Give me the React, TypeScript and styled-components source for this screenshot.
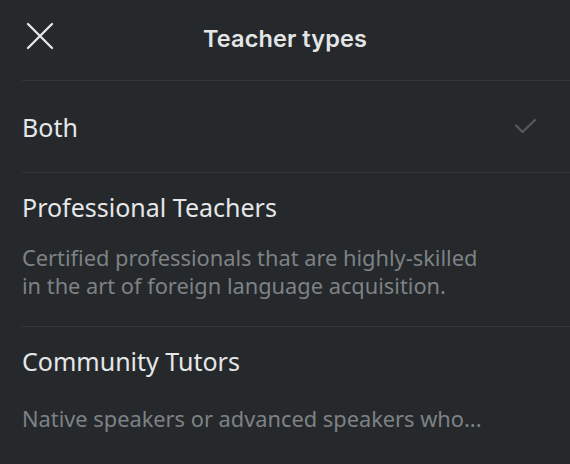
import React from "react";
import styled, { createGlobalStyle } from "styled-components";

const GlobalStyle = createGlobalStyle`
  html, body {
    margin: 0;
    padding: 0;
    background: #25292c;
  }
  body {
    font-family: "Noto Sans", "Open Sans", sans-serif;
    -webkit-font-smoothing: antialiased;
  }
`;

const Screen = styled.div`
  width: 570px;
  height: 464px;
  overflow: hidden;
  background: #25292c;
  display: flex;
  flex-direction: column;
`;

const Header = styled.header`
  position: relative;
  height: 80px;
  display: flex;
  align-items: center;
  justify-content: center;
  flex-shrink: 0;
`;

const CloseButton = styled.button`
  position: absolute;
  left: 22px;
  top: 18px;
  width: 36px;
  height: 36px;
  padding: 0;
  border: none;
  background: transparent;
  display: flex;
  align-items: center;
  justify-content: center;
  cursor: pointer;
`;

const Title = styled.h1`
  margin: 0;
  margin-top: -4px;
  font-family: "Inter", "Noto Sans", sans-serif;
  font-weight: 600;
  font-size: 23.5px;
  letter-spacing: 0.1px;
  color: #e4e5e6;
`;

const List = styled.ul`
  list-style: none;
  margin: 0;
  padding: 0;
`;

const Item = styled.li<{ $compact?: boolean }>`
  margin-left: 22px;
  border-top: 1px solid #33373a;
  display: flex;
  align-items: center;
  justify-content: space-between;
  padding: ${(p) => (p.$compact ? "0 32px 0 0" : "18px 32px 26px 0")};
  height: ${(p) => (p.$compact ? "91px" : "auto")};
`;

const Texts = styled.div`
  display: flex;
  flex-direction: column;
`;

const Label = styled.div`
  font-size: 25px;
  line-height: 32px;
  color: #e6e7e8;
`;

const Description = styled.p<{ $gap: number }>`
  margin: ${(p) => p.$gap}px 0 0;
  font-size: 21.8px;
  line-height: 28px;
  color: #7e8285;
  max-width: 470px;
`;

const CheckIcon = () => (
  <svg width="24" height="18" viewBox="0 0 24 18" fill="none">
    <path
      d="M2 7.5 L8.5 14 L21 2"
      stroke="#55595c"
      strokeWidth="2.2"
      strokeLinecap="round"
      strokeLinejoin="round"
    />
  </svg>
);

const CloseIcon = () => (
  <svg width="28" height="28" viewBox="0 0 28 28" fill="none">
    <path
      d="M2 2 L26 26 M26 2 L2 26"
      stroke="#e6e7e8"
      strokeWidth="2.3"
      strokeLinecap="round"
    />
  </svg>
);

export default function App() {
  return (
    <>
      <GlobalStyle />
      <Screen>
        <Header>
          <CloseButton aria-label="Close">
            <CloseIcon />
          </CloseButton>
          <Title>Teacher types</Title>
        </Header>
        <List>
          <Item $compact>
            <Label>Both</Label>
            <CheckIcon />
          </Item>
          <Item>
            <Texts>
              <Label>Professional Teachers</Label>
              <Description $gap={21}>
                Certified professionals that are highly-skilled in the art of
                foreign language acquisition.
              </Description>
            </Texts>
          </Item>
          <Item>
            <Texts>
              <Label>Community Tutors</Label>
              <Description $gap={28}>
                Native speakers or advanced speakers who...
              </Description>
            </Texts>
          </Item>
        </List>
      </Screen>
    </>
  );
}
